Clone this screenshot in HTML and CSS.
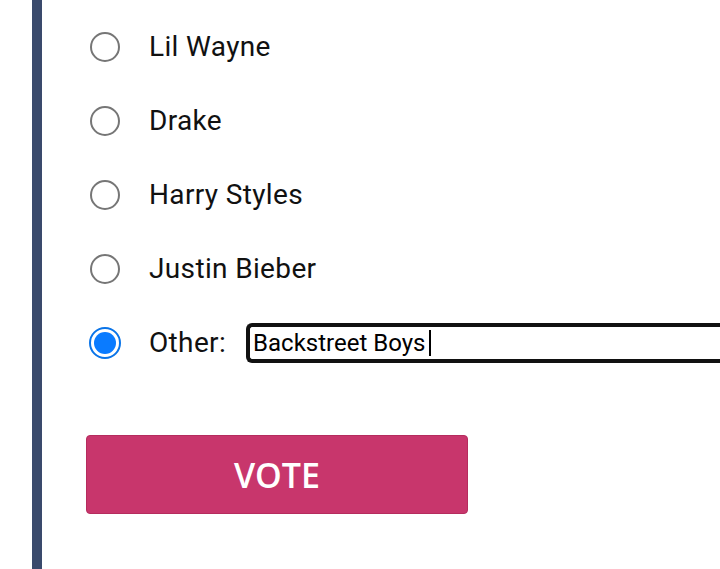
FILE: index.html
```html
<!DOCTYPE html>
<html>
<head>
<meta charset="utf-8">
<link rel="stylesheet" href="styles.css">
</head>
<body>
<div class="panel">
  <form class="poll">
    <div class="option"><span class="radio"></span><span class="label">Lil Wayne</span></div>
    <div class="option"><span class="radio"></span><span class="label">Drake</span></div>
    <div class="option"><span class="radio"></span><span class="label">Harry Styles</span></div>
    <div class="option"><span class="radio"></span><span class="label">Justin Bieber</span></div>
    <div class="option"><span class="radio checked"></span><span class="label">Other:</span>
      <div class="other-input"><span class="value">Backstreet Boys</span><span class="caret"></span></div>
    </div>
    <div class="actions"><button type="button" class="vote">VOTE</button></div>
  </form>
</div>
</body>
</html>
```
FILE: styles.css
```css
html, body {
  margin: 0;
  padding: 0;
  background: #ffffff;
  overflow: hidden;
}
body {
  width: 720px;
  height: 569px;
  font-family: Roboto, "Liberation Sans", sans-serif;
  color: #111;
}
.panel {
  margin-left: 32px;
  border-left: 10px solid #3a4a6c;
  height: 569px;
  box-sizing: border-box;
  padding-top: 10px;
}
.poll {
  display: flex;
  flex-direction: column;
}
.option {
  height: 74px;
  display: flex;
  align-items: center;
  padding-left: 48px;
}
.radio {
  width: 30px;
  height: 30px;
  box-sizing: border-box;
  border: 2px solid #767676;
  border-radius: 50%;
  flex: none;
  position: relative;
}
.radio.checked {
  width: 32px;
  height: 32px;
  margin-left: -1px;
  margin-right: -1px;
  border: 2px solid #0a74e8;
  background: #fff;
}
.radio.checked::after {
  content: "";
  position: absolute;
  left: 3px;
  top: 3px;
  width: 22px;
  height: 22px;
  border-radius: 50%;
  background: #0a7bff;
}
.label {
  margin-left: 29px;
  font-size: 28px;
  line-height: 32px;
  letter-spacing: 0.35px;
}
.other-input {
  margin-left: 20px;
  flex: 1;
  height: 40px;
  box-sizing: border-box;
  border: 4px solid #111;
  border-right: none;
  border-radius: 6px 0 0 6px;
  display: flex;
  align-items: center;
  padding-left: 3px;
  margin-right: -2px;
}
.value {
  font-size: 24px;
  color: #000;
}
.caret {
  width: 2px;
  height: 26px;
  background: #000;
  margin-left: 4px;
}
.actions {
  padding-left: 44px;
  margin-top: 55px;
}
.vote {
  width: 382px;
  height: 79px;
  border: 1px solid #b52c5e;
  border-radius: 4px;
  background: #c8366c;
  color: #fff;
  font-family: "Open Sans", "Noto Sans", sans-serif;
  font-weight: 600;
  font-size: 34px;
  padding: 0;
}
```
